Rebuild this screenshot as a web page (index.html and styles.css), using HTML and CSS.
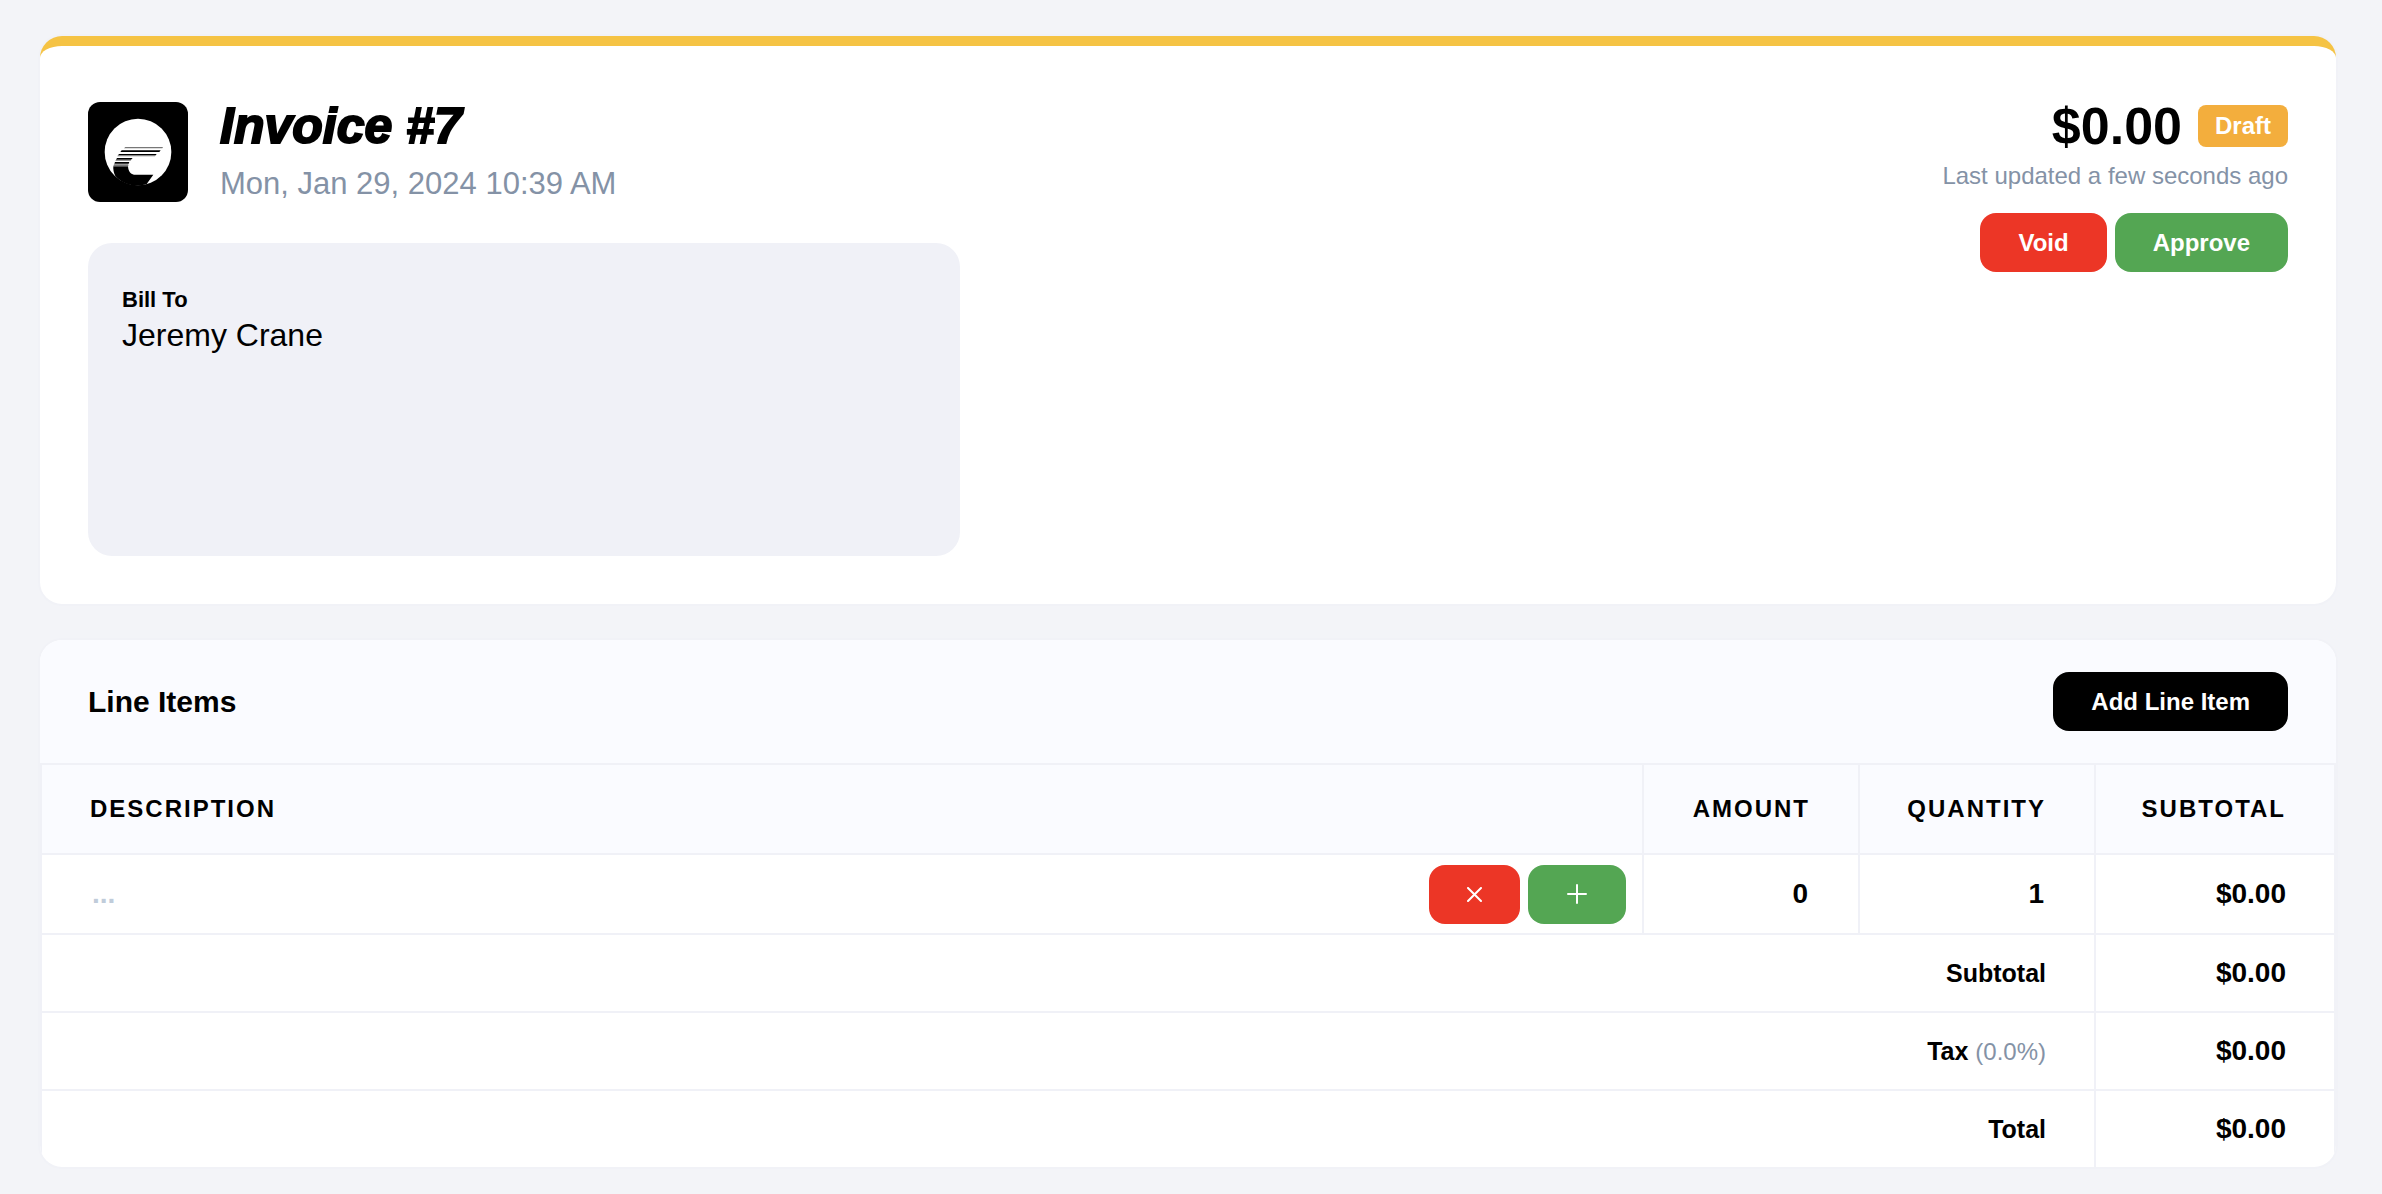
FILE: index.html
```html
<!DOCTYPE html>
<html lang="en">
  <head>
    <meta charset="UTF-8" />
    <meta name="viewport" content="width=device-width, initial-scale=1.0" />
    <title>Invoice #7</title>
    <link rel="stylesheet" href="styles.css">
  </head>
  <body>
    <section class="card invoice">
      <div class="invoice-main">
        <header class="invoice-header">
          <svg class="logo" viewBox="0 0 300 300" aria-hidden="true">
            <rect width="300" height="300" rx="36" />
            <circle cx="150" cy="150" r="100" fill="#fff" />
            <!-- wave -->
            <path d="M76 193 H120 C121 207 127 217 138 218 H196 L176 246 C148 256 106 250 82 222 C77 212 75 202 76 193 Z" />
            <path d="M101 145 H218 L214 150 H97 Z M93 156 H206 L203 160 H90 Z M87 168 H134 L129 173 H84 Z M81 180 H124 L122 185 H79 Z" />
            <path d="M112 135 H225 L223 139 H108 Z M90 160 H203 L201 163 H88 Z M84 173 H129 L128 176 H82 Z M78 187 H121 V193 H76 Z" fill="#777" />
          </svg>
          <div>
            <h1 class="title">Invoice #7</h1>
            <p class="date">Mon, Jan 29, 2024 10:39 AM</p>
          </div>
        </header>
        <div class="bill-to">
          <p class="bill-label">Bill To</p>
          <p class="bill-name">Jeremy Crane</p>
        </div>
      </div>

      <div class="invoice-side">
        <div class="balance">
          <span class="balance-amount">$0.00</span>
          <span class="badge">Draft</span>
        </div>
        <p class="updated">Last updated a few seconds ago</p>
        <div class="actions">
          <button type="button" class="btn btn-red">Void</button>
          <button type="button" class="btn btn-green">Approve</button>
        </div>
      </div>
    </section>

    <section class="card items">
      <header class="items-header">
        <h2 class="items-title">Line Items</h2>
        <button type="button" class="btn btn-black">Add Line Item</button>
      </header>
      <table class="items-table">
        <thead>
          <tr>
            <th class="col-description">Description</th>
            <th class="col-amount">Amount</th>
            <th class="col-quantity">Quantity</th>
            <th class="col-subtotal">Subtotal</th>
          </tr>
        </thead>
        <tbody>
          <tr class="item-row">
            <td class="col-description">
              <div class="item-description">
                <input type="text" class="field" placeholder="..." aria-label="Description" />
                <div class="actions">
                  <button type="button" class="btn btn-red" aria-label="Remove">
                    <svg width="15" height="15" viewBox="0 0 15 15"><path d="M1 1L14 14M14 1L1 14" /></svg>
                  </button>
                  <button type="button" class="btn btn-green" aria-label="Add">
                    <svg width="22" height="22" viewBox="0 0 22 22"><path d="M11 2V20M2 11H20" /></svg>
                  </button>
                </div>
              </div>
            </td>
            <td><input type="text" class="field field-number" value="0" aria-label="Amount" /></td>
            <td><input type="text" class="field field-number" value="1" aria-label="Quantity" /></td>
            <td class="money">$0.00</td>
          </tr>
          <tr class="total-row">
            <td colspan="3">Subtotal</td>
            <td class="money">$0.00</td>
          </tr>
          <tr class="total-row">
            <td colspan="3">Tax <span class="muted">(0.0%)</span></td>
            <td class="money">$0.00</td>
          </tr>
          <tr class="total-row">
            <td colspan="3">Total</td>
            <td class="money">$0.00</td>
          </tr>
        </tbody>
      </table>
    </section>
  </body>
</html>
```
FILE: styles.css
```css
* {
  box-sizing: border-box;
}

body {
  margin: 0;
  padding: 36px 46px 26px 40px;
  font-family: "Liberation Sans", Arial, sans-serif;
  font-size: 24px;
  color: #000;
  background-color: #f3f4f8;
}

h1,
h2,
p {
  margin: 0;
}

.card {
  background-color: #fff;
  border-radius: 22px;
  box-shadow: 0 0 0 2px #f1f2f7;
}

/* invoice summary */
.invoice {
  display: flex;
  justify-content: space-between;
  padding: 56px 48px 48px;
  border-top: 10px solid #f5c344;
  margin-bottom: 36px;
}

.invoice-main {
  flex: 1;
}

.invoice-header {
  display: flex;
  gap: 32px;
}

.logo {
  width: 100px;
  height: 100px;
}

.title {
  font-size: 50px;
  line-height: 48px;
  font-style: italic;
  -webkit-text-stroke: 2px #000;
}

.date {
  margin-top: 12px;
  font-size: 31px;
  line-height: 44px;
  color: #8492a6;
}

.bill-to {
  width: 47%;
  min-height: 313px;
  margin-top: 37px;
  padding: 42px 34px;
  background-color: #f0f1f7;
  border-radius: 24px;
}

.bill-label {
  font-size: 22px;
  line-height: 30px;
  font-weight: bold;
}

.bill-name {
  font-size: 32px;
  line-height: 40px;
}

.invoice-side {
  text-align: right;
}

.balance {
  display: flex;
  justify-content: flex-end;
  align-items: center;
  gap: 16px;
}

.balance-amount {
  font-size: 52px;
  line-height: 48px;
  font-weight: bold;
}

.badge {
  padding: 0 17px;
  line-height: 42px;
  font-weight: bold;
  color: #fff;
  background-color: #f3ae3d;
  border-radius: 8px;
}

.updated {
  margin: 10px 0 21px;
  line-height: 32px;
  color: #8492a6;
}

.actions {
  display: flex;
  justify-content: flex-end;
  gap: 8px;
}

.btn {
  display: flex;
  align-items: center;
  height: 59px;
  padding: 0 38px;
  border: none;
  border-radius: 16px;
  font-family: inherit;
  font-size: 24px;
  font-weight: bold;
  color: #fff;
  cursor: pointer;
}

.btn svg {
  fill: none;
  stroke: #fff;
  stroke-width: 2;
  stroke-linecap: round;
}

.btn-red {
  background-color: #ec3626;
}

.btn-green {
  background-color: #54a653;
}

.btn-black {
  background-color: #000;
}

/* line items */
.items {
  overflow: hidden;
}

.items-header {
  display: flex;
  justify-content: space-between;
  align-items: center;
  padding: 32px 48px;
  background-color: #fafbff;
}

.items-title {
  font-size: 30px;
}

.items-table {
  width: 100%;
  border-spacing: 0;
  table-layout: fixed;
  border-right: 2px solid #f1f2f7;
}

th,
td {
  padding: 0 48px;
  border-top: 2px solid #f0f1f7;
  border-left: 2px solid #f0f1f7;
  text-align: right;
}

th {
  height: 90px;
  letter-spacing: 2px;
  text-transform: uppercase;
  background-color: #fafbff;
}

th.col-description {
  text-align: left;
}

td.col-description {
  padding-right: 16px;
}

th.col-amount,
th.col-quantity,
th.col-subtotal {
  padding-left: 0;
}

.col-amount {
  width: 216px;
}

.col-quantity {
  width: 236px;
}

.col-subtotal {
  width: 240px;
}

.item-row td {
  height: 80px;
}

.item-description {
  display: flex;
  align-items: center;
}

.field {
  flex: 1;
  width: 100%;
  padding: 1px 2px;
  border: none;
  outline: none;
  font-family: inherit;
  font-size: 28px;
  font-weight: bold;
  background: none;
}

.field::placeholder {
  color: #c0ccda;
}

.field-number {
  text-align: right;
}

.total-row td {
  height: 78px;
  font-size: 25px;
  font-weight: bold;
}

.items-table .money {
  padding-left: 0;
  font-size: 28px;
  font-weight: bold;
}

.muted {
  font-size: 24px;
  font-weight: normal;
  color: #8492a6;
}
```
